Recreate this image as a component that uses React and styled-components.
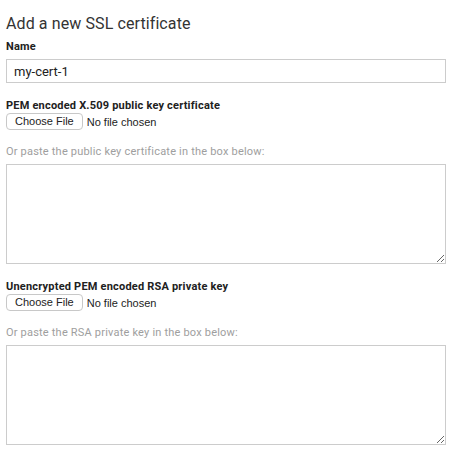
import React from "react";
import styled, { createGlobalStyle } from "styled-components";

const Global = createGlobalStyle`
  html, body { margin: 0; padding: 0; background: #fff; }
  body { font-family: Roboto, "Noto Sans", Arial, sans-serif; color: #212121; }
  * { box-sizing: border-box; }
`;

const Page = styled.form`
  width: 440px;
  margin-left: 6px;
  padding-top: 14px;
  display: flex;
  flex-direction: column;
`;

const Title = styled.h2`
  margin: 0 0 6px 0;
  font-size: 16px;
  line-height: 20px;
  font-weight: 400;
  letter-spacing: 0.1px;
  color: #333;
`;

const Label = styled.label`
  display: block;
  font-size: 11px;
  line-height: 14px;
  font-weight: 700;
  letter-spacing: 0.2px;
  color: #212121;
  margin: ${(p) => p.$top || 0}px 0 ${(p) => p.$bottom || 0}px;
`;

const TextInput = styled.input`
  width: 440px;
  height: 24px;
  border: 1px solid #ccc;
  border-radius: 0;
  padding: 0 7px;
  font-family: Roboto, Arial, sans-serif;
  font-size: 13px;
  color: #212121;
  outline: none;
`;

const FileRow = styled.div`
  display: flex;
  align-items: center;
  gap: 4px;
  height: 17px;
`;

const FileButton = styled.button`
  height: 17px;
  padding: 0 8px;
  border: 1px solid #c8c8c8;
  border-radius: 4px;
  background: #fff;
  font-family: "Liberation Sans", Arial, sans-serif;
  font-size: 11px;
  line-height: 15px;
  color: #222;
  cursor: pointer;
`;

const FileStatus = styled.span`
  font-family: "Liberation Sans", Arial, sans-serif;
  font-size: 11px;
  color: #222;
`;

const Hint = styled.div`
  margin: 15px 0 5px;
  font-size: 11px;
  line-height: 14px;
  color: #9e9e9e;
  letter-spacing: 0.2px;
`;

const Area = styled.textarea`
  width: 440px;
  height: 100px;
  border: 1px solid #ccc;
  border-radius: 0;
  resize: vertical;
  padding: 4px 7px;
  font-family: Roboto, Arial, sans-serif;
  font-size: 13px;
  outline: none;
  display: block;
`;

function FileField({ label, hint, top }) {
  return (
    <>
      <Label $top={top}>{label}</Label>
      <FileRow>
        <FileButton type="button">Choose File</FileButton>
        <FileStatus>No file chosen</FileStatus>
      </FileRow>
      <Hint>{hint}</Hint>
      <Area />
    </>
  );
}

export default function App() {
  return (
    <>
      <Global />
      <Page onSubmit={(e) => e.preventDefault()}>
        <Title>Add a new SSL certificate</Title>
        <Label $bottom={5}>Name</Label>
        <TextInput defaultValue="my-cert-1" />
        <FileField
          top={16}
          label="PEM encoded X.509 public key certificate"
          hint="Or paste the public key certificate in the box below:"
        />
        <FileField
          top={16}
          label="Unencrypted PEM encoded RSA private key"
          hint="Or paste the RSA private key in the box below:"
        />
      </Page>
    </>
  );
}
